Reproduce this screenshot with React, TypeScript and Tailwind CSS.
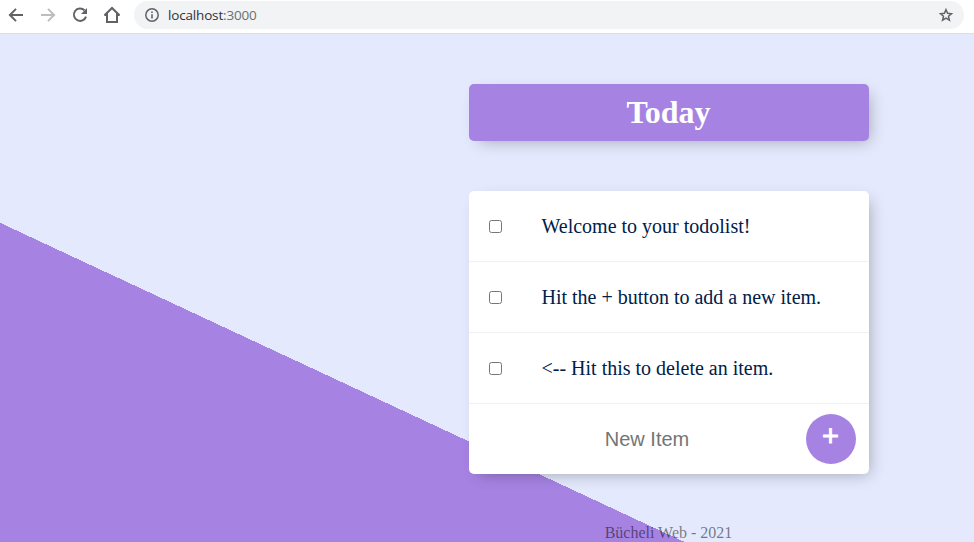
import type { ReactNode } from "react";

const items = [
  "Welcome to your todolist!",
  "Hit the + button to add a new item.",
  "<-- Hit this to delete an item.",
];

function Icon({ size = 20, width = 2, className = "", children }: { size?: number; width?: number; className?: string; children: ReactNode }) {
  return (
    <svg width={size} height={size} viewBox={`0 0 ${size} ${size}`} fill="none" stroke="currentColor" strokeWidth={width} className={className}>
      {children}
    </svg>
  );
}

function BrowserBar() {
  return (
    <div className="flex h-[34px] shrink-0 items-start border-b border-[#dcdee3] bg-white pl-[6px] pr-[10px] pt-[1px] text-[#5f6368]">
      <div className="flex h-7 w-[128px] items-center gap-[12px]">
        <Icon>
          <path d="M17 10H4.5M10 3.9 3.9 10l6.1 6.1" />
        </Icon>
        <Icon className="text-[#bbbdbf]">
          <path d="M3 10h12.5M10 3.9 16.1 10 10 16.1" />
        </Icon>
        <Icon>
          <path d="M14.5 5.3A6.2 6.2 0 1 0 16 11.600" />
          <path d="M17 3V9h-6z" fill="currentColor" stroke="none" />
        </Icon>
        <Icon>
          <path d="M2.6 10.2 10 3l7.4 7.2M5 8.6V17h10V8.6" />
          <path d="M2.4 10.2H5.5M14.5 10.2h3.1" strokeWidth="1.4" />
        </Icon>
      </div>
      <div className="flex h-7 flex-1 items-center rounded-full bg-[#f1f3f4] pl-[10px] pr-[10px]">
        <Icon size={16} width={1.5}>
          <circle cx="8" cy="8" r="6.2" />
          <path d="M8 7.2V11.5M8 4.5V6.1" strokeWidth="1.6" />
        </Icon>
        <span className="ml-2 flex-1 font-['Open_Sans',sans-serif] text-[13.5px] tracking-[-0.17px] text-[#303236]">
          localhost<span className="text-[#6b6f73]">:3000</span>
        </span>
        <Icon size={16} width={1.5}>
          <path d="M8 2.700 9.600 6.300 13.500 6.700 10.500 9.300 11.400 13.100 8 11.100 4.600 13.100 5.500 9.300 2.500 6.700 6.400 6.300Z" />
        </Icon>
      </div>
    </div>
  );
}

export default function App() {
  return (
    <div className="flex h-[542px] w-[974px] flex-col overflow-hidden">
      <BrowserBar />
      <main className="h-[1001px] w-[1337px] shrink-0 bg-[linear-gradient(25deg,#A683E3_50%,#E4E9FD_50%)] pt-[50px] font-['Liberation_Serif',serif]">
        <div className="mx-auto w-[400px] rounded-[5px] bg-[#A683E3] p-[10px] text-center shadow-[5px_5px_15px_-5px_rgba(0,0,0,0.3)]">
          <h1 className="text-[32px] font-bold leading-[37px] text-white">Today</h1>
        </div>
        <div className="mx-auto mt-[50px] w-[400px] rounded-[5px] bg-white shadow-[5px_5px_15px_-5px_rgba(0,0,0,0.3)]">
          {items.map((item) => (
            <div key={item} className="flex h-[71px] items-center border-b border-[#f1f1f1]">
              <input type="checkbox" className="m-5 size-[13px]" />
              <p className="pl-5 pt-px text-[20px] leading-[23px] text-[#00204a]">{item}</p>
            </div>
          ))}
          <form className="flex h-[70px] items-center pl-[20px]">
            <input
              type="text"
              placeholder="New Item"
              className="h-[60px] w-[317px] bg-transparent text-center font-['Liberation_Sans',sans-serif] text-[20px] outline-none placeholder:text-[#757575]"
            />
            <button
              type="button"
              className="size-[50px] rounded-full bg-[#A683E3] pb-[7px] font-['Liberation_Sans',sans-serif] text-[29px] leading-[34px] text-white [-webkit-text-stroke:0.8px_white]"
            >
              +
            </button>
          </form>
        </div>
        <footer className="mt-[50px] text-center text-[16px] leading-[18px] text-black/50">Bücheli Web - 2021</footer>
      </main>
    </div>
  );
}
